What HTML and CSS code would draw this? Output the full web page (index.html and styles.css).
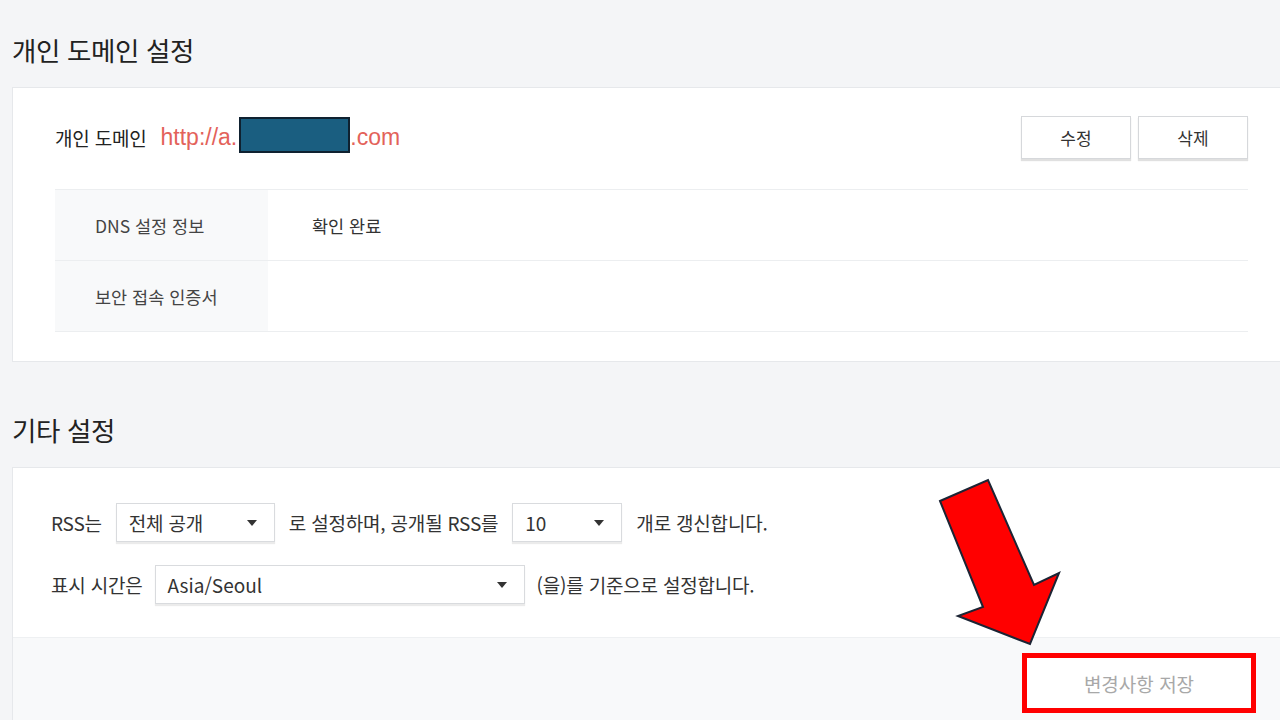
FILE: index.html
```html
<!DOCTYPE html>
<html lang="ko">
<head>
<meta charset="utf-8">
<title>블로그 설정</title>
<link rel="stylesheet" href="styles.css">
</head>
<body>
<div class="page">
  <section class="section">
    <h2 class="section-title">개인 도메인 설정</h2>
    <div class="card card-domain">
      <div class="domain-row">
        <div class="domain-info">
          <span class="domain-label">개인 도메인</span>
          <span class="domain-url">http://a.<span class="redact"></span>.com</span>
        </div>
        <div class="btn-group">
          <button class="btn">수정</button>
          <button class="btn">삭제</button>
        </div>
      </div>
      <div class="info-table">
        <div class="info-row">
          <div class="info-label">DNS 설정 정보</div>
          <div class="info-value">확인 완료</div>
        </div>
        <div class="info-row">
          <div class="info-label">보안 접속 인증서</div>
          <div class="info-value"></div>
        </div>
      </div>
    </div>
  </section>

  <section class="section section-etc">
    <h2 class="section-title">기타 설정</h2>
    <div class="card card-etc">
      <div class="etc-body">
        <div class="form-line">
          <span>RSS는</span>
          <div class="select sel-open"><span>전체 공개</span><i class="caret"></i></div>
          <span>로 설정하며, 공개될 RSS를</span>
          <div class="select sel-count"><span>10</span><i class="caret"></i></div>
          <span>개로 갱신합니다.</span>
        </div>
        <div class="form-line line-tz">
          <span>표시 시간은</span>
          <div class="select sel-tz"><span class="latin">Asia/Seoul</span><i class="caret"></i></div>
          <span>(을)를 기준으로 설정합니다.</span>
        </div>
      </div>
      <div class="etc-footer">
        <button class="btn-save">변경사항 저장</button>
      </div>
    </div>
  </section>
</div>

<svg class="arrow" width="140" height="185" viewBox="0 0 140 185" aria-hidden="true">
  <polygon points="10,31 58,10 104,115 129,103 100,174 28,146 53,137" fill="#ff0000" stroke="#1c2434" stroke-width="2" stroke-linejoin="miter"/>
</svg>
</body>
</html>
```

FILE: styles.css
```css
* { box-sizing: border-box; }

html, body {
  margin: 0;
  padding: 0;
}

body {
  position: relative;
  width: 1280px;
  height: 720px;
  overflow: hidden;
  background: #f4f5f7;
  font-family: "Noto Sans CJK KR", "Noto Sans", sans-serif;
  color: #333;
}

.page {
  padding: 32px 0 0 12px;
}

.section-title {
  margin: 0 0 19px 0;
  height: 36px;
  line-height: 36px;
  font-size: 26.5px;
  font-weight: 400;
  color: #222;
  letter-spacing: -0.4px;
}

.section-etc {
  margin-top: 50px;
}

.card {
  background: #fff;
  border: 1px solid #e6e8eb;
  border-right: 0;
}

/* ---------- domain card ---------- */
.card-domain {
  padding: 28px 32px 29px 42px;
}

.domain-row {
  display: flex;
  align-items: center;
  justify-content: space-between;
  height: 43px;
}

.domain-info {
  display: flex;
  align-items: center;
  gap: 14px;
}

.domain-label {
  font-size: 19px;
  color: #222;
  letter-spacing: -0.2px;
}

.domain-url {
  display: flex;
  align-items: center;
  font-family: "Liberation Sans", Arial, sans-serif;
  font-size: 23px;
  color: #e3625a;
}

.redact {
  display: inline-block;
  width: 111px;
  height: 36px;
  margin-top: -6px;
  margin-left: 2px;
  background: #1a5e80;
  border: 2px solid #0f2130;
}

.btn-group {
  display: flex;
  gap: 7px;
}

.btn {
  width: 110px;
  height: 43px;
  background: #fff;
  border: 1px solid #d6d8db;
  box-shadow: 0 2px 1px rgba(0, 0, 0, 0.12);
  font-family: inherit;
  font-size: 17px;
  color: #333;
  padding: 0;
}

.info-table {
  margin-top: 30px;
  border-top: 1px solid #eceef0;
}

.info-row {
  display: flex;
  height: 71px;
  border-bottom: 1px solid #eceef0;
}

.info-label {
  width: 213px;
  background: #f8f9fa;
  padding-left: 40px;
  display: flex;
  align-items: center;
  font-size: 17.5px;
  color: #444;
}

.info-value {
  padding-left: 44px;
  display: flex;
  align-items: center;
  font-size: 17.5px;
  color: #333;
}

/* ---------- etc card ---------- */
.card-etc {
  height: 253px;
  border-bottom: 0;
  display: flex;
  flex-direction: column;
}

.etc-body {
  padding: 35px 0 33px 38px;
  display: flex;
  flex-direction: column;
  gap: 23px;
  border-bottom: 1px solid #eef0f2;
}

.form-line {
  display: flex;
  align-items: center;
  gap: 14px;
  font-size: 19px;
  color: #333;
  letter-spacing: -0.2px;
}

.line-tz {
  gap: 12px;
}

.select {
  display: flex;
  align-items: center;
  justify-content: space-between;
  height: 39px;
  padding: 0 17px 0 12px;
  background: #fff;
  border: 1px solid #d9dbde;
  box-shadow: 0 2px 1px rgba(0, 0, 0, 0.08);
  font-size: 19px;
  color: #333;
}

.sel-open { width: 159px; }
.sel-count { width: 110px; }
.sel-tz { width: 370px; }

.latin {
  letter-spacing: 0;
}

.caret {
  width: 0;
  height: 0;
  border-left: 5px solid transparent;
  border-right: 5px solid transparent;
  border-top: 6px solid #333;
}

.etc-footer {
  flex: 1;
  background: #f8f9fa;
  display: flex;
  justify-content: flex-end;
  align-items: flex-start;
  padding: 15px 24px 0 0;
}

.btn-save {
  width: 234px;
  height: 60px;
  background: #fff;
  border: 5px solid #ff0000;
  font-family: inherit;
  font-size: 19px;
  color: #a8a8a8;
  padding: 0;
}

/* annotation arrow overlay */
.arrow {
  position: absolute;
  left: 930px;
  top: 470px;
}
```
